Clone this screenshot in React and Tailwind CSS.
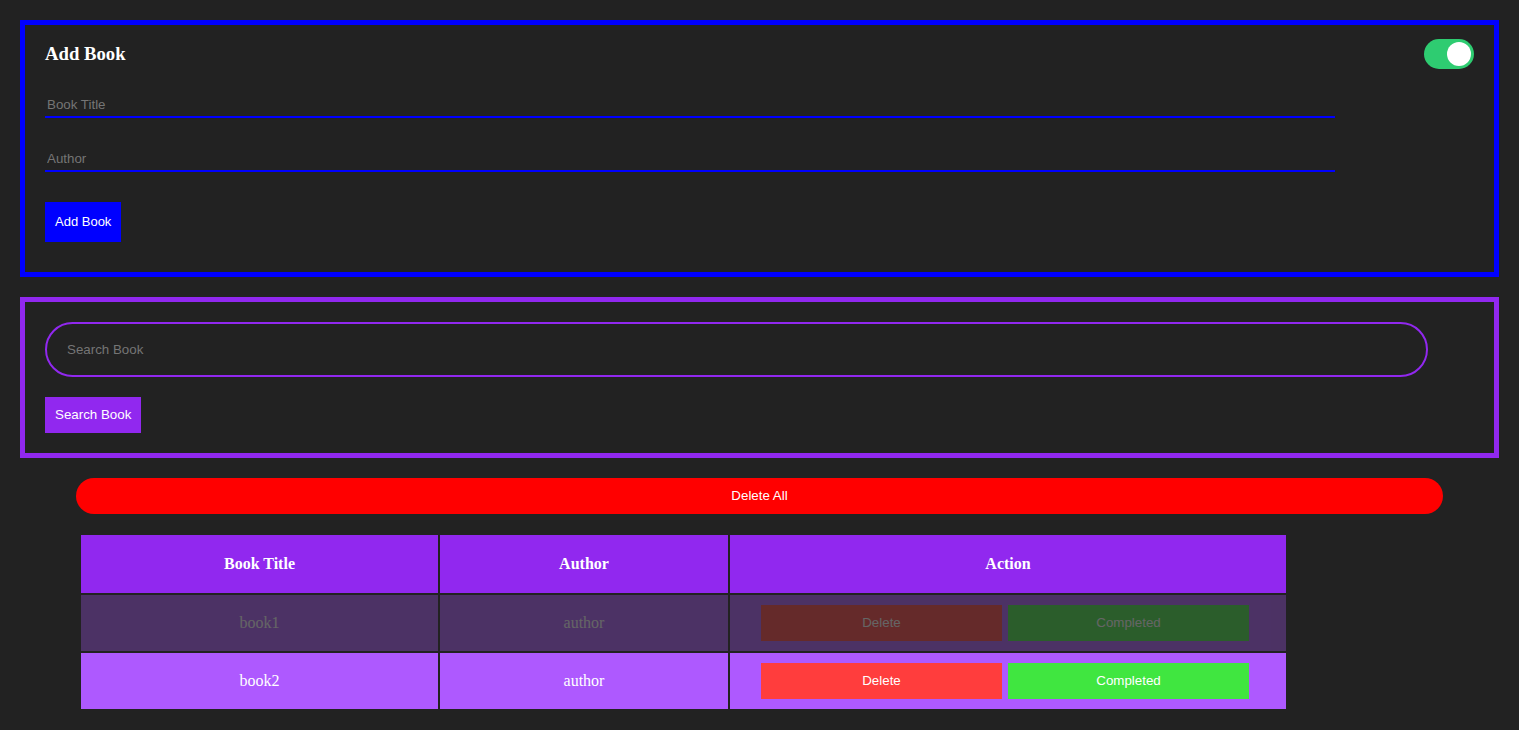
import React, { useState } from "react";

const serif = "font-['Liberation_Serif','Times_New_Roman',serif]";
const sans = "font-['Liberation_Sans',Arial,sans-serif]";

const App = () => {
  const [enabled, setEnabled] = useState(true);
  const [books] = useState([
    { id: 1, title: "book1", author: "author", completed: true },
    { id: 2, title: "book2", author: "author", completed: false },
  ]);

  return (
    <div className={`min-h-[730px] bg-[#222222] pt-[20px] pb-[20px] ${sans}`}>
      {/* Add Book */}
      <div className="mx-[20px] border-[5px] border-[#0000ff] px-[20px] pt-[14px] pb-[30px]">
        <div className="flex items-center justify-between h-[30px]">
          <h3 className={`text-[18.72px] font-bold text-white ${serif}`}>Add Book</h3>
          <button
            onClick={() => setEnabled(!enabled)}
            className={`w-[50px] h-[30px] rounded-full p-[3px] flex items-center ${
              enabled ? "bg-[#2ecc71] justify-end" : "bg-[#555] justify-start"
            }`}
          >
            <span className="block w-[24px] h-[24px] rounded-full bg-white" />
          </button>
        </div>
        <input
          type="text"
          placeholder="Book Title"
          className="block mt-[23px] w-[1290px] h-[26px] px-[2px] bg-transparent text-[13.33px] text-white placeholder:text-[#757575] border-b-2 border-[#0000ff] outline-none"
        />
        <input
          type="text"
          placeholder="Author"
          className="block mt-[28px] w-[1290px] h-[26px] px-[2px] bg-transparent text-[13.33px] text-white placeholder:text-[#757575] border-b-2 border-[#0000ff] outline-none"
        />
        <button className="mt-[30px] h-[40px] px-[10px] bg-[#0000ff] text-white text-[13px]">
          Add Book
        </button>
      </div>

      {/* Search */}
      <div className="mx-[20px] mt-[20px] border-[5px] border-[#9128ef] p-[20px]">
        <input
          type="text"
          placeholder="Search Book"
          className="block w-[1383px] h-[55px] rounded-full border-2 border-[#9128ef] bg-transparent pl-[20px] text-[13.33px] text-white placeholder:text-[#757575] outline-none"
        />
        <button className="mt-[20px] h-[36px] px-[10px] bg-[#9128ef] text-white text-[13.33px]">
          Search Book
        </button>
      </div>

      {/* Delete All */}
      <div className="flex justify-center mt-[20px]">
        <button className="w-[90%] h-[36px] rounded-full bg-[#ff0000] text-white text-[13.33px]">
          Delete All
        </button>
      </div>

      {/* Table */}
      <div className="pl-[79px] mt-[19px]">
        <table className={`border-separate border-spacing-[2px] text-[16px] text-white ${serif}`}>
          <thead>
            <tr className="h-[58px] bg-[#9128ef]">
              <th className="w-[357px] font-bold">Book Title</th>
              <th className="w-[288px] font-bold">Author</th>
              <th className="w-[556px] font-bold">Action</th>
            </tr>
          </thead>
          <tbody>
            {books.map((book) => (
              <tr key={book.id} className={`h-[56px] ${book.completed ? "opacity-30" : ""}`}>
                <td className="bg-[#ae59ff] text-center">{book.title}</td>
                <td className="bg-[#ae59ff] text-center">{book.author}</td>
                <td className="bg-[#ae59ff]">
                  <div className={`flex justify-center gap-[6px] pr-[6px] ${sans}`}>
                    <button className="w-[241px] h-[36px] bg-[#ff3d3d] text-[13.33px] text-white">
                      Delete
                    </button>
                    <button className="w-[241px] h-[36px] bg-[#40e640] text-[13.33px] text-white">
                      Completed
                    </button>
                  </div>
                </td>
              </tr>
            ))}
          </tbody>
        </table>
      </div>
    </div>
  );
};

export default App;
